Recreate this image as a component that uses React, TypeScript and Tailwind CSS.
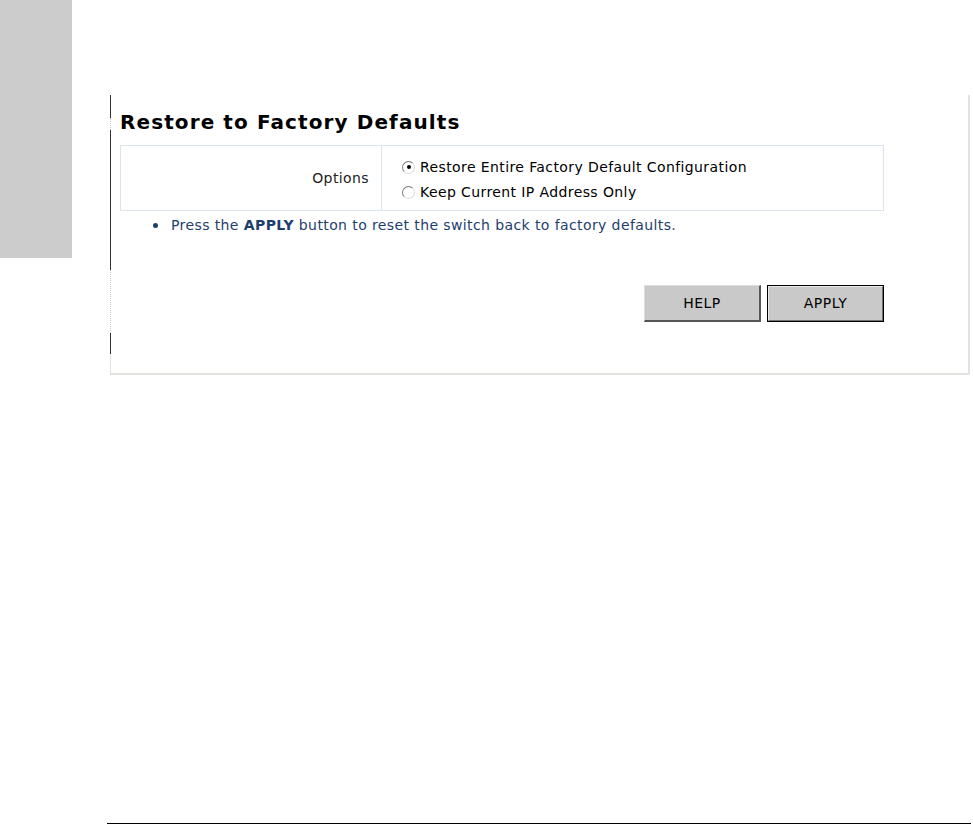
import React, { useState } from 'react';

const font = 'font-["DejaVu_Sans",Verdana,sans-serif]';

const Radio = ({ checked, onClick }: { checked: boolean; onClick: () => void }) => (
    <span
        onClick={onClick}
        className="relative inline-flex w-[13px] h-[13px] rounded-full border border-t-[#7a7a7a] border-l-[#7a7a7a] border-b-[#dadada] border-r-[#dadada] bg-white items-center justify-center cursor-pointer shrink-0"
    >
        {checked && <span className="w-[4px] h-[4px] rounded-full bg-black" />}
    </span>
);

const App = () => {
    const [option, setOption] = useState<'all' | 'ip'>('all');

    return (
        <div className={`w-[973px] h-[825px] bg-white flex flex-col ${font}`}>
            <div className="flex items-start">
                {/* left gray nav strip */}
                <div className="w-[72px] h-[258px] bg-[#cccccc] shrink-0" />

                {/* main frame */}
                <div className="ml-[38px] mt-[95px] w-[860px] h-[280px] flex border-r-2 border-b-2 border-[#e2e2de]">
                    <div className="w-[1px] flex flex-col shrink-0">
                        <div className="h-[23px] bg-[#333333]" />
                        <div className="h-[12px] border-l border-dotted border-[#cfcfcf]" />
                        <div className="h-[140px] bg-[#333333]" />
                        <div className="h-[63px] border-l border-dotted border-[#cfcfcf]" />
                        <div className="h-[21px] bg-[#333333]" />
                        <div className="flex-1 bg-[#e2e2de]" />
                    </div>

                    <div className="flex-1 pl-[9px] pt-[16px]">
                        <h1 className="text-[20px] leading-[22px] font-bold text-black tracking-[1.1px]">Restore to Factory Defaults</h1>

                        <div className="mt-[12px] w-[764px] h-[66px] flex border border-[#dbe3ec] text-[14px] tracking-[0.4px]">
                            <div className="w-[261px] border-r border-[#dbe3ec] flex items-center justify-end pr-[12px] pt-[1px] text-[#222222]">
                                Options
                            </div>
                            <div className="flex-1 flex flex-col justify-center gap-[7px] pl-[20px] pt-[3px] text-black">
                                <label className="flex items-center gap-[5px] leading-[18px]">
                                    <Radio checked={option === 'all'} onClick={() => setOption('all')} />
                                    <span>Restore Entire Factory Default Configuration</span>
                                </label>
                                <label className="flex items-center gap-[5px] leading-[18px]">
                                    <Radio checked={option === 'ip'} onClick={() => setOption('ip')} />
                                    <span>Keep Current IP Address Only</span>
                                </label>
                            </div>
                        </div>

                        <ul className="mt-[5px] pl-[33px] text-[14px] tracking-[0.4px] leading-[18px] text-[#1d3e6e]">
                            <li className="flex items-center gap-[13px]">
                                <span className="w-[5px] h-[5px] rounded-full bg-[#1d3e6e]" />
                                <span>
                                    Press the <b>APPLY</b> button to reset the switch back to factory defaults.
                                </span>
                            </li>
                        </ul>

                        <div className="mt-[51px] w-[764px] flex justify-end gap-[6px]">
                            <button
                                type="button"
                                className="w-[117px] h-[37px] bg-[#c9c9c9] border-t border-l border-t-[#dcdcdc] border-l-[#dcdcdc] border-b-2 border-r-2 border-b-[#555555] border-r-[#555555] text-[14px] tracking-[0.5px] text-black"
                            >
                                HELP
                            </button>
                            <button
                                type="button"
                                className="w-[117px] h-[37px] bg-black p-[1px] flex"
                            >
                                <span className="flex-1 flex items-center justify-center bg-[#c9c9c9] border-t border-l border-t-[#e8e8e8] border-l-[#e8e8e8] border-b border-r border-b-[#707070] border-r-[#707070] text-[14px] tracking-[0.5px] text-black">
                                    APPLY
                                </span>
                            </button>
                        </div>
                    </div>
                </div>
            </div>

            <div className="flex-1" />
            <div className="ml-[107px] w-[864px] h-[1px] bg-black mb-[1px]" />
        </div>
    );
};

export default App;
